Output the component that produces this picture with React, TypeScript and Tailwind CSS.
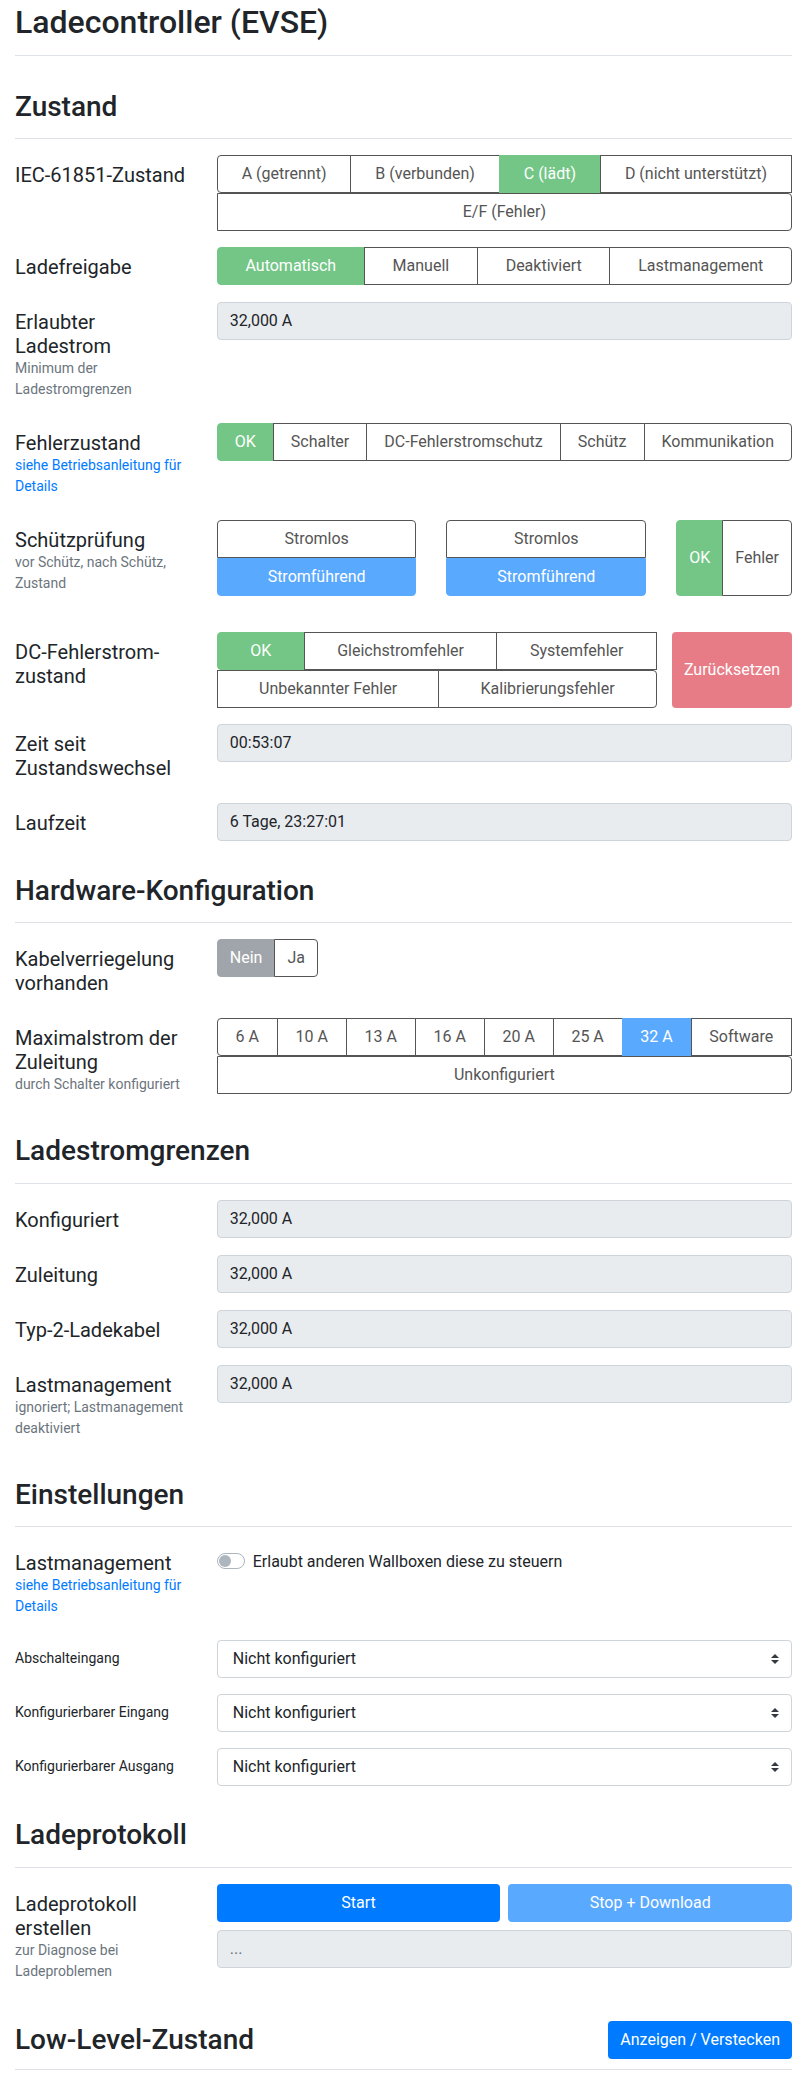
import { ReactNode } from "react";
import clsx from "clsx";

type V = "o" | "g" | "b" | "n" | "r";
type B = [string, V?];

const variants: Record<V, string> = {
  o: "bg-white border-[#555] text-[#555]",
  g: "bg-[#73c686] border-[#73c686] text-white",
  b: "bg-[#59a9ff] border-[#59a9ff] text-white",
  n: "bg-[#9fa5aa] border-[#9fa5aa] text-white",
  r: "bg-[#e87c86] border-[#e87c86] text-white",
};

function ButtonGroup({
  rows,
  stretch = true,
  className,
}: {
  rows: B[][];
  stretch?: boolean;
  className?: string;
}) {
  const last = rows.length - 1;
  return (
    <div className={clsx("flex flex-col", className)}>
      {rows.map((row, ri) => (
        <div key={ri} className="flex">
          {row.map(([label, v = "o"], i) => (
            <div
              key={label}
              className={clsx(
                "h-[38px] px-3 border flex items-center justify-center whitespace-nowrap text-base leading-6",
                stretch && "flex-auto",
                i > 0 && "-ml-px",
                ri === 0 && i === 0 && "rounded-l",
                ri === last && i === row.length - 1 && "rounded-r",
                variants[v]
              )}
            >
              {label}
            </div>
          ))}
        </div>
      ))}
    </div>
  );
}

function ReadOnly({ value, muted }: { value: string; muted?: boolean }) {
  return (
    <div
      className={clsx(
        "h-[38px] px-3 flex items-center border border-[#ced4da] bg-[#e9ecef] rounded text-base",
        muted ? "text-[#6c757d]" : "text-[#212529]"
      )}
    >
      {value}
    </div>
  );
}

function Select({ value }: { value: string }) {
  return (
    <div className="h-[38px] pl-[15px] pr-3 flex items-center justify-between border border-[#ced4da] bg-white rounded text-base">
      <span>{value}</span>
      <svg width="8" height="10" viewBox="0 0 4 5">
        <path d="M2 0L0 2h4zm0 5L0 3h4z" fill="#343a40" />
      </svg>
    </div>
  );
}

type RowProps = {
  label: string;
  sub?: string;
  link?: boolean;
  small?: boolean;
  className?: string;
  children: ReactNode;
};

function Row({ label, sub, link, small, className = "mb-4", children }: RowProps) {
  return (
    <div className={clsx("flex gap-[30px]", className)}>
      <div className="w-[171.75px] shrink-0 pt-2 pb-[7px]">
        <div className={small ? "text-[14px] leading-[21px]" : "text-[20px] leading-6"}>
          {label}
        </div>
        {sub && (
          <div
            className={clsx(
              "text-[14px] leading-[21px]",
              link ? "text-[#007bff]" : "text-[#6c757d]"
            )}
          >
            {sub}
          </div>
        )}
      </div>
      <div className="flex-1 min-w-0">{children}</div>
    </div>
  );
}

function Section({
  title,
  first,
  right,
  children,
}: {
  title: string;
  first?: boolean;
  right?: ReactNode;
  children?: ReactNode;
}) {
  return (
    <div className={first ? "mt-[33.6px]" : "mt-8"}>
      <div
        className={clsx(
          "flex items-center justify-between border-b border-[#dee2e6] mb-4",
          right ? "pb-[10px]" : "pb-[14.8px]"
        )}
      >
        <h3 className="text-[28px] font-medium leading-[33.6px]">{title}</h3>
        {right}
      </div>
      {children}
    </div>
  );
}

export default function App() {
  return (
    <div className="min-h-screen bg-white px-[15px] font-[Roboto,sans-serif] text-[#212529]">
      <div className="pt-[3px] pb-[13.6px] border-b border-[#dee2e6]">
        <h1 className="text-[32px] font-medium leading-[38.4px]">Ladecontroller (EVSE)</h1>
      </div>

      <Section title="Zustand" first>
        <Row label="IEC-61851-Zustand">
          <ButtonGroup
            rows={[
              [["A (getrennt)"], ["B (verbunden)"], ["C (lädt)", "g"], ["D (nicht unterstützt)"]],
              [["E/F (Fehler)"]],
            ]}
          />
        </Row>
        <Row label="Ladefreigabe">
          <ButtonGroup
            rows={[[["Automatisch", "g"], ["Manuell"], ["Deaktiviert"], ["Lastmanagement"]]]}
          />
        </Row>
        <Row label="Erlaubter Ladestrom" sub="Minimum der Ladestromgrenzen">
          <ReadOnly value="32,000 A" />
        </Row>
        <Row label="Fehlerzustand" sub="siehe Betriebsanleitung für Details" link>
          <ButtonGroup
            rows={[
              [["OK", "g"], ["Schalter"], ["DC-Fehlerstromschutz"], ["Schütz"], ["Kommunikation"]],
            ]}
          />
        </Row>
        <Row label="Schützprüfung" sub="vor Schütz, nach Schütz, Zustand" className="mb-[31px]">
          <div className="flex gap-[30px]">
            <div className="flex-1 flex flex-col">
              <div className="h-[38px] border rounded-t flex items-center justify-center bg-white border-[#555] text-[#555]">
                Stromlos
              </div>
              <div className="h-[38px] border rounded-b flex items-center justify-center bg-[#59a9ff] border-[#59a9ff] text-white">
                Stromführend
              </div>
            </div>
            <div className="flex-1 flex flex-col">
              <div className="h-[38px] border rounded-t flex items-center justify-center bg-white border-[#555] text-[#555]">
                Stromlos
              </div>
              <div className="h-[38px] border rounded-b flex items-center justify-center bg-[#59a9ff] border-[#59a9ff] text-white">
                Stromführend
              </div>
            </div>
            <div className="flex h-[76px]">
              <div className="px-3 border rounded-l flex items-center bg-[#73c686] border-[#73c686] text-white">
                OK
              </div>
              <div className="-ml-px px-3 border rounded-r flex items-center bg-white border-[#555] text-[#555]">
                Fehler
              </div>
            </div>
          </div>
        </Row>
        <Row label="DC-Fehlerstrom-zustand">
          <div className="flex gap-[15px]">
            <ButtonGroup
              className="flex-1"
              rows={[
                [["OK", "g"], ["Gleichstromfehler"], ["Systemfehler"]],
                [["Unbekannter Fehler"], ["Kalibrierungsfehler"]],
              ]}
            />
            <div className="px-3 rounded flex items-center justify-center bg-[#e87c86] text-white">
              Zurücksetzen
            </div>
          </div>
        </Row>
        <Row label="Zeit seit Zustandswechsel">
          <ReadOnly value="00:53:07" />
        </Row>
        <Row label="Laufzeit">
          <ReadOnly value="6 Tage, 23:27:01" />
        </Row>
      </Section>

      <Section title="Hardware-Konfiguration">
        <Row label="Kabelverriegelung vorhanden">
          <ButtonGroup className="w-fit" stretch={false} rows={[[["Nein", "n"], ["Ja"]]]} />
        </Row>
        <Row label="Maximalstrom der Zuleitung" sub="durch Schalter konfiguriert">
          <ButtonGroup
            rows={[
              [["6 A"], ["10 A"], ["13 A"], ["16 A"], ["20 A"], ["25 A"], ["32 A", "b"], ["Software"]],
              [["Unkonfiguriert"]],
            ]}
          />
        </Row>
      </Section>

      <Section title="Ladestromgrenzen">
        <Row label="Konfiguriert">
          <ReadOnly value="32,000 A" />
        </Row>
        <Row label="Zuleitung">
          <ReadOnly value="32,000 A" />
        </Row>
        <Row label="Typ-2-Ladekabel">
          <ReadOnly value="32,000 A" />
        </Row>
        <Row label="Lastmanagement" sub="ignoriert; Lastmanagement deaktiviert">
          <ReadOnly value="32,000 A" />
        </Row>
      </Section>

      <Section title="Einstellungen">
        <Row label="Lastmanagement" sub="siehe Betriebsanleitung für Details" link>
          <div className="pt-[7px] flex items-start">
            <div className="mt-[3px] w-[28px] h-[16px] rounded-full border border-[#adb5bd] bg-white flex items-center px-[1px]">
              <div className="w-3 h-3 rounded-full bg-[#adb5bd]" />
            </div>
            <span className="ml-2 text-base leading-6">
              Erlaubt anderen Wallboxen diese zu steuern
            </span>
          </div>
        </Row>
        <Row label="Abschalteingang" small>
          <Select value="Nicht konfiguriert" />
        </Row>
        <Row label="Konfigurierbarer Eingang" small>
          <Select value="Nicht konfiguriert" />
        </Row>
        <Row label="Konfigurierbarer Ausgang" small>
          <Select value="Nicht konfiguriert" />
        </Row>
      </Section>

      <Section title="Ladeprotokoll">
        <Row label="Ladeprotokoll erstellen" sub="zur Diagnose bei Ladeproblemen">
          <div className="grid grid-cols-2 gap-2">
            <div className="h-[38px] rounded flex items-center justify-center bg-[#007bff] text-white">
              Start
            </div>
            <div className="h-[38px] rounded flex items-center justify-center bg-[#59a9ff] text-white">
              Stop + Download
            </div>
          </div>
          <div className="mt-2">
            <ReadOnly value="..." muted />
          </div>
        </Row>
      </Section>

      <Section
        title="Low-Level-Zustand"
        right={
          <div className="h-[38px] px-3 rounded flex items-center bg-[#007bff] text-white">
            Anzeigen / Verstecken
          </div>
        }
      />
    </div>
  );
}
